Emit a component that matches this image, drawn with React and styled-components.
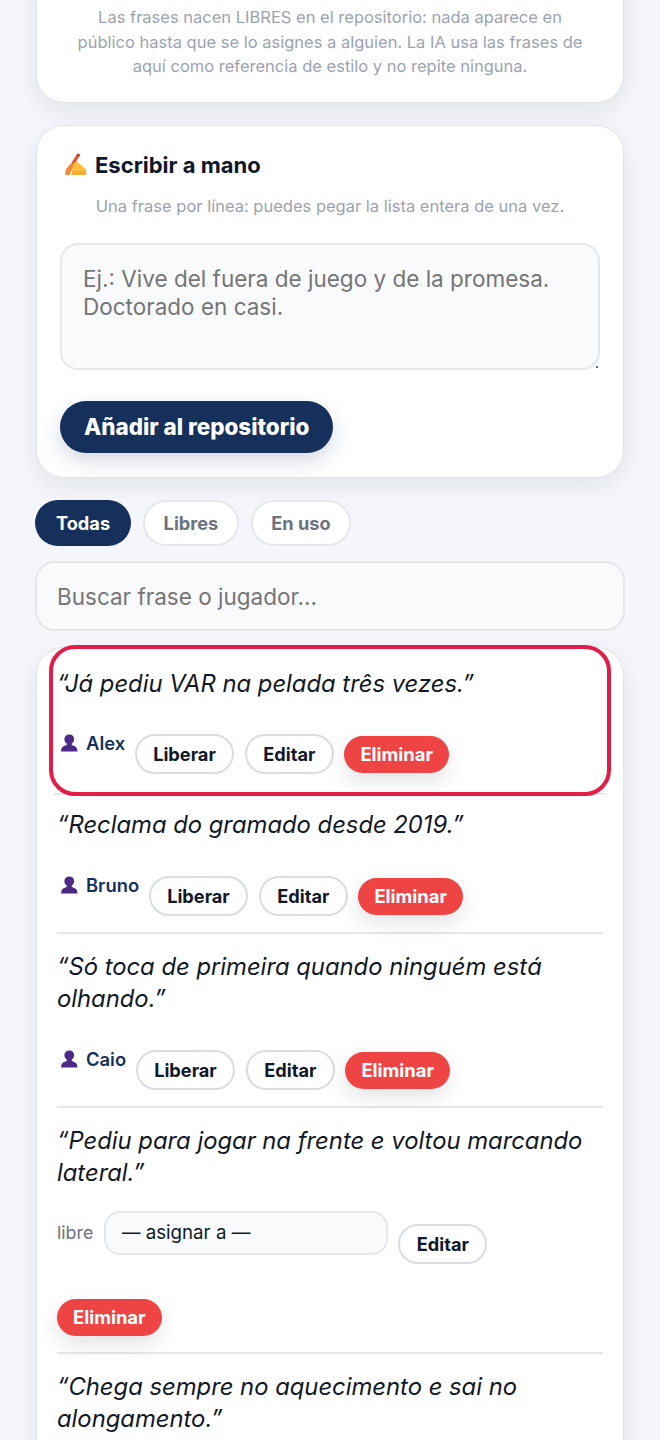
import React from 'react';
import styled, { createGlobalStyle } from 'styled-components';

const GlobalStyle = createGlobalStyle`
    html, body {
        margin: 0;
        height: 1440px;
        overflow: hidden;
        background: #f4f6fb;
    }
    * {
        box-sizing: border-box;
    }
`;

const Page = styled.div`
    height: 1440px;
    overflow: hidden;
    padding: 0 35px;
    font-family: Inter, "Liberation Sans", sans-serif;
    color: #111827;
`;

const Card = styled.section`
    margin: 0 1px 22px;
    background: #ffffff;
    border: 1px solid #e2e4e9;
    border-radius: 28px;
    box-shadow: 0 8px 24px rgba(15, 23, 42, 0.08);
`;

const NoteCard = styled(Card)`
    margin-top: -40px;
    padding: 44px 35px 23px;
`;

const WriteCard = styled(Card)`
    margin-bottom: 22px;
    padding: 25px 23px 24px;
`;

const Note = styled.p`
    margin: 0;
    text-align: center;
    font-size: 16.5px;
    line-height: 24.5px;
    color: #9ca3af;
`;

const Title = styled.h3`
    display: flex;
    align-items: center;
    gap: 7px;
    margin: 0 0 15px 3px;
    font-size: 22px;
    line-height: 28px;
    font-weight: 700;
    color: #0f172a;
`;

const SubNote = styled(Note)`
    margin-bottom: 25px;
    line-height: 24px;
`;

const TextAreaWrap = styled.div`
    position: relative;

    &::after {
        content: '';
        position: absolute;
        right: 2px;
        bottom: 2px;
        width: 2px;
        height: 2px;
        background: #6b7280;
    }
`;

const TextArea = styled.textarea`
    display: block;
    width: 100%;
    height: 127px;
    padding: 20px 21px;
    resize: none;
    background: #f9fafb;
    border: 2px solid #e5e7eb;
    border-radius: 18px;
    font-family: inherit;
    font-size: 22.5px;
    line-height: 28.5px;
    color: #111827;
`;

const AddButton = styled.button`
    display: block;
    margin-top: 31px;
    height: 52px;
    padding: 0 24px;
    background: #16305c;
    border: 0;
    border-radius: 26px;
    color: #ffffff;
    font-family: inherit;
    font-size: 22.4px;
    font-weight: 800;
    box-shadow: 0 8px 20px rgba(22, 48, 92, 0.18);
`;

const Tabs = styled.div`
    display: flex;
    gap: 12px;
    margin-bottom: 15px;
`;

const Tab = styled.button`
    height: 46px;
    padding: 0 ${(p) => (p.$active ? '21px' : '18.5px')};
    background: ${(p) => (p.$active ? '#16305c' : '#ffffff')};
    border: ${(p) => (p.$active ? '0' : '2px solid #e5e7eb')};
    border-radius: 23px;
    color: ${(p) => (p.$active ? '#ffffff' : '#6b7280')};
    font-family: inherit;
    font-size: 18.2px;
    font-weight: 700;
`;

const Search = styled.input`
    display: block;
    width: 100%;
    height: 70px;
    margin-bottom: 16px;
    padding: 1px 20px 0;
    background: #f9fafb;
    border: 2px solid #e5e7eb;
    border-radius: 20px;
    font-family: inherit;
    font-size: 22.5px;
`;

const ListCard = styled(Card)`
    margin-bottom: 0;
    padding: 3px 20px 0;
`;

const Row = styled.article`
    position: relative;
    padding: 17px ${(p) => (p.$highlight ? '3px' : '0')} ${(p) => (p.$highlight ? '19px' : '16px')};
    margin: ${(p) => (p.$highlight ? '0 -3px -3px' : '0')};
    border-bottom: 2px solid #e5e7eb;

    ${(p) =>
        p.$highlight &&
        `
        & > p {
            margin-bottom: 34px;
        }

        &::after {
            content: '';
            position: absolute;
            inset: -6px -5px -3px -5px;
            border: 4px solid #e11d48;
            border-radius: 26px;
            pointer-events: none;
        }
    `}
`;

const Quote = styled.p`
    margin: 0 0 35px;
    font-size: 23.8px;
    line-height: 32px;
    font-style: italic;
    color: #111827;
`;

const Meta = styled.div`
    display: flex;
    flex-wrap: wrap;
    align-items: flex-start;
    column-gap: 10.5px;
    row-gap: 33px;
`;

const Player = styled.span`
    display: inline-flex;
    align-items: center;
    gap: 8px;
    height: 18px;
    margin: 0 -1px 0 4px;
    font-size: 18.4px;
    font-weight: 600;
    color: #16305c;
`;

const Free = styled.span`
    margin-top: -13px;
    font-size: 17.8px;
    line-height: 44px;
    color: #6b7280;
`;

const Assign = styled.select`
    width: 284px;
    height: 44px;
    margin-top: -13px;
    padding: 0 16px;
    appearance: none;
    background: #f9fafb;
    border: 2px solid #e5e7eb;
    border-radius: 16px;
    font-family: inherit;
    font-size: 18.7px;
    color: #111827;
`;

const ActionButton = styled.button`
    height: 40px;
    padding: 0 16.5px;
    background: #ffffff;
    border: 2px solid #d9dde3;
    border-radius: 20px;
    font-family: inherit;
    font-size: 18.2px;
    font-weight: 700;
    color: #111827;
`;

const DeleteButton = styled.button`
    height: 37px;
    margin-top: 2px;
    padding: 0 16px;
    background: #ef4444;
    border: 0;
    border-radius: 19px;
    font-family: inherit;
    font-size: 18.4px;
    font-weight: 700;
    color: #ffffff;
    box-shadow: 0 8px 20px rgba(15, 23, 42, 0.12);
`;

// the select takes more room here, so the delete button drops to its own line
const FreeDeleteButton = styled(DeleteButton)`
    margin-right: 6px;
`;

const WritingHand = () => (
    <svg width="25" height="24" viewBox="0 0 25 24" aria-hidden="true">
        <path d="M14 1l3 1.2-6 10-3-1.4z" fill="#e4572e" />
        <path d="M14.6 0.5l2.6 1-1 2-2.6-1z" fill="#c9342a" />
        <path d="M9 12l4-3.5 4 2.5 6 5.5V22H9z" fill="#fcc23d" />
        <path d="M8 10.5l3 1.5-5 10.5-4-1 1-5.5z" fill="#ef8a3a" />
        <path d="M9 18h14v4H8z" fill="#f9ab38" />
    </svg>
);

const PersonIcon = () => (
    <svg width="17" height="18" viewBox="0 0 17 18" aria-hidden="true">
        <path
            d="M8.5 0.5c2.8 0 4.6 2 4.6 4.6 0 1.9-.9 3.6-2.3 4.5v1.3c1.7.6 4.7 1.6 5.2 3.6l.5 3H0l.5-3c.5-2 3.5-3 5.2-3.6V9.6C4.3 8.7 3.4 7 3.4 5.1 3.4 2.5 5.7.5 8.5.5z"
            fill="#4c2a85"
        />
    </svg>
);

const AssignedActions = () => (
    <>
        <ActionButton>Liberar</ActionButton>
        <ActionButton>Editar</ActionButton>
        <DeleteButton>Eliminar</DeleteButton>
    </>
);

const FreeActions = () => (
    <>
        <Free>libre</Free>
        <Assign defaultValue="">
            <option value="">— asignar a —</option>
        </Assign>
        <ActionButton>Editar</ActionButton>
        <FreeDeleteButton>Eliminar</FreeDeleteButton>
    </>
);

const phrases = [
    { text: '“Já pediu VAR na pelada três vezes.”', player: 'Alex', highlight: true },
    { text: '“Reclama do gramado desde 2019.”', player: 'Bruno' },
    { text: '“Só toca de primeira quando ninguém está olhando.”', player: 'Caio' },
    { text: '“Pediu para jogar na frente e voltou marcando lateral.”', free: true },
    { text: '“Chega sempre no aquecimento e sai no alongamento.”' },
];

export default function App() {
    return (
        <>
            <GlobalStyle />
            <Page>
                <NoteCard>
                    <Note>
                        Las frases nacen LIBRES en el repositorio: nada aparece en público hasta que se lo asignes a alguien. La IA usa las frases de aquí como referencia de estilo y no repite ninguna.
                    </Note>
                </NoteCard>
                <WriteCard>
                    <Title>
                        <WritingHand />
                        Escribir a mano
                    </Title>
                    <SubNote>Una frase por línea: puedes pegar la lista entera de una vez.</SubNote>
                    <TextAreaWrap>
                        <TextArea placeholder={'Ej.: Vive del fuera de juego y de la promesa.\nDoctorado en casi.'} />
                    </TextAreaWrap>
                    <AddButton>Añadir al repositorio</AddButton>
                </WriteCard>
                <Tabs>
                    <Tab $active>Todas</Tab>
                    <Tab>Libres</Tab>
                    <Tab>En uso</Tab>
                </Tabs>
                <Search placeholder="Buscar frase o jugador..." />
                <ListCard>
                    {phrases.map((phrase) => (
                        <Row key={phrase.text} $highlight={phrase.highlight}>
                            <Quote>{phrase.text}</Quote>
                            {phrase.player && (
                                <Meta>
                                    <Player>
                                        <PersonIcon />
                                        {phrase.player}
                                    </Player>
                                    <AssignedActions />
                                </Meta>
                            )}
                            {phrase.free && (
                                <Meta>
                                    <FreeActions />
                                </Meta>
                            )}
                        </Row>
                    ))}
                </ListCard>
            </Page>
        </>
    );
}
